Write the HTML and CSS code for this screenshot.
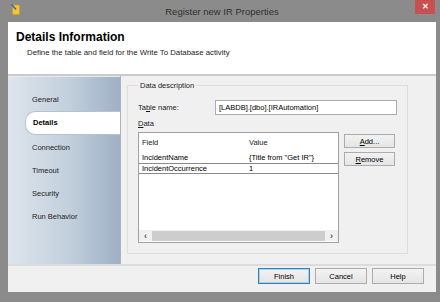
FILE: index.html
```html
<!DOCTYPE html>
<html lang="en">
<head>
  <meta charset="UTF-8">
  <title>Register new IR Properties</title>
  <link rel="stylesheet" href="styles.css">
</head>
<body>

<div class="window">
  <!-- Title bar -->
  <div class="titlebar">
    <svg class="app-icon" width="9" height="11" viewBox="0 0 9 11">
      <rect x="1.5" y="1" width="7" height="9.5" rx="1" fill="#f3c637" stroke="#d79a18" stroke-width="0.8"/>
      <path d="M0.5 0.5 L5 5.5" stroke="#4a6fa5" stroke-width="1.8"/>
    </svg>
    <span class="title">Register new IR Properties</span>
    <div class="close">&#x2715;</div>
  </div>

  <div class="client">
    <!-- Header -->
    <div class="header">
      <h1>Details Information</h1>
      <p>Define the table and field for the Write To Database activity</p>
    </div>

    <div class="main">
      <!-- Left navigation -->
      <ul class="nav">
        <li>General</li>
        <li class="active">Details</li>
        <li>Connection</li>
        <li>Timeout</li>
        <li>Security</li>
        <li>Run Behavior</li>
      </ul>

      <!-- Page content -->
      <div class="page">
        <fieldset class="group">
          <legend>Data description</legend>
          <div class="row">
            <label for="tableName">Ta<u>b</u>le name:</label>
            <input type="text" id="tableName" value="[LABDB].[dbo].[IRAutomation]">
          </div>
          <div class="data-label"><u>D</u>ata</div>
          <div class="data-area">
            <div class="list">
              <div class="list-head">
                <span class="col-field">Field</span>
                <span class="col-value">Value</span>
              </div>
              <div class="list-row">
                <span class="col-field">IncidentName</span>
                <span class="col-value">{Title from "Get IR"}</span>
              </div>
              <div class="list-row focused">
                <span class="col-field">IncidentOccurrence</span>
                <span class="col-value">1</span>
              </div>
              <div class="list-fill"></div>
              <div class="hscroll">
                <span class="arrow">&#x2039;</span>
                <div class="thumb"></div>
                <span class="arrow">&#x203A;</span>
              </div>
            </div>
            <div class="side-buttons">
              <button><u>A</u>dd...</button>
              <button><u>R</u>emove</button>
            </div>
          </div>
        </fieldset>
      </div>
    </div>

    <!-- Footer buttons -->
    <div class="footer">
      <button class="default">Finish</button>
      <button>Cancel</button>
      <button>Help</button>
    </div>
  </div>
</div>

</body>
</html>
```

FILE: styles.css
```css
body {
  margin: 0;
  padding: 0;
  font-family: "Liberation Sans", Arial, sans-serif;
  font-size: 8px;
  color: #1a1a1a;
  background-color: #8b8b8b;
}
.window {
  width: 440px;
  height: 302px;
  box-sizing: border-box;
  padding: 0 4px 10px 8px;
  background-color: #8b8b8b;
  display: flex;
  flex-direction: column;
}
.titlebar {
  height: 22px;
  display: flex;
  align-items: center;
  position: relative;
}
.app-icon {
  position: absolute;
  left: 3px;
  top: 4px;
}
.title {
  flex: 1;
  text-align: center;
  font-size: 9.5px;
  color: #303030;
  padding-left: 0;
}
.close {
  position: absolute;
  right: 1px;
  top: 0;
  width: 20px;
  height: 14px;
  background-color: #c75050;
  color: white;
  font-size: 8px;
  font-weight: bold;
  text-align: center;
  line-height: 14px;
}
.client {
  flex: 1;
  display: flex;
  flex-direction: column;
  background-color: #f0f0f0;
}
.header {
  height: 52px;
  background: white;
  border-bottom: 2px solid #cbcbcb;
  padding: 0 0 0 8px;
}
.header h1 {
  margin: 8px 0 0 0;
  font-size: 12px;
  font-weight: bold;
  color: #000;
}
.header p {
  margin: 4px 0 0 11px;
  font-size: 7.8px;
  color: #222;
}
.main {
  height: 188px;
  display: flex;
  border-bottom: 2px solid #dcdcdc;
}
.nav {
  width: 112px;
  margin: 0;
  padding: 11px 0 0 17px;
  box-sizing: border-box;
  list-style: none;
  background: linear-gradient(to right, #dee5ed, #c2cfdc 55%, #9eb0c5);
  border-top: 1px solid #e6ecf2;
}
.nav li {
  height: 23px;
  line-height: 23px;
  padding-left: 7px;
  font-size: 7.5px;
  color: #222;
}
.nav li.active {
  height: 22px;
  line-height: 22px;
  background: white;
  font-weight: bold;
  color: #000;
  border-radius: 10px 0 0 10px;
  border: 1px solid #b8c2cc;
  border-right: none;
  margin: 0 0 1px 0;
  padding-left: 7px;
}
.page {
  flex: 1;
  border-left: 1px solid #a9b3be;
  padding: 5px 28px 10px 6px;
  background-color: #f0f0f0;
}
.group {
  margin: 0;
  height: 100%;
  box-sizing: border-box;
  border: 1px solid #dddddd;
  padding: 4px 10px 9px 10px;
}
.group legend {
  padding: 0 2px;
  font-size: 7.5px;
  color: #222;
}
.row {
  display: flex;
  align-items: center;
  margin-top: 6px;
}
.row label {
  width: 77px;
  font-size: 7.5px;
}
.row input {
  flex: 1;
  height: 15px;
  box-sizing: border-box;
  border: 1px solid #abadb3;
  padding: 0 3px;
  font-family: "Liberation Sans", Arial, sans-serif;
  font-size: 7.5px;
  color: #000;
  background: white;
  margin-right: 0;
}
.data-label {
  margin-top: 4px;
  font-size: 7.5px;
}
.data-area {
  display: flex;
  gap: 5px;
  margin-top: 4px;
}
.list {
  width: 201px;
  height: 111px;
  box-sizing: border-box;
  border: 1px solid #a0a0a0;
  background: white;
  display: flex;
  flex-direction: column;
  font-size: 7.5px;
}
.list-head {
  display: flex;
  height: 19px;
  align-items: center;
  color: #222;
}
.list-row {
  display: flex;
  height: 11px;
  align-items: center;
  color: #000;
}
.list-row.focused {
  border: 1px solid #8a8a8a;
  border-left: none;
  border-right: none;
  box-sizing: border-box;
  height: 11px;
}
.col-field {
  width: 107px;
  padding-left: 3px;
}
.col-value {
  flex: 1;
}
.list-fill {
  flex: 1;
}
.hscroll {
  height: 11px;
  display: flex;
  align-items: center;
  background-color: #f0f0f0;
  margin-bottom: 1px;
}
.hscroll .arrow {
  width: 13px;
  text-align: center;
  font-size: 9px;
  font-weight: bold;
  color: #555;
}
.hscroll .thumb {
  flex: 1;
  height: 10px;
  background-color: #cdcdcd;
}
.side-buttons {
  display: flex;
  flex-direction: column;
  gap: 4px;
  margin-top: 2px;
}
button {
  width: 51px;
  height: 14px;
  padding: 0;
  border: 1px solid #acacac;
  border-radius: 0;
  background: linear-gradient(#f2f2f2, #e5e5e5);
  font-family: "Liberation Sans", Arial, sans-serif;
  font-size: 7.5px;
  color: #000;
}
.footer {
  flex: 1;
  display: flex;
  justify-content: flex-end;
  align-items: flex-start;
  gap: 5px;
  padding: 2px 12px 0 0;
}
.footer button {
  height: 16px;
  width: 52px;
}
.footer button.default {
  border-color: #3c7fb1;
  box-shadow: inset 0 0 0 1px #9fd0f5;
}
```
